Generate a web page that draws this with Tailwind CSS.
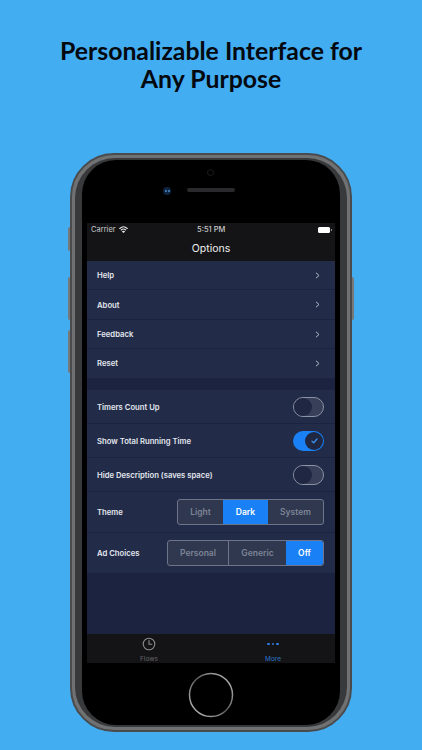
<!DOCTYPE html>
<html lang="en">

<head>
    <meta charset="UTF-8" />
    <title>Options</title>
    <script src="https://cdn.jsdelivr.net/npm/@tailwindcss/browser@4"></script>
</head>

<body class="bg-[#42adf0] w-[422px] h-[750px] overflow-hidden font-['Inter','Liberation_Sans',sans-serif]">

    <h1 class="pt-[37px] h-[153px] text-center text-[24.8px] leading-[27.5px] font-bold text-[#04080f] font-['Lato',sans-serif]">
        Personalizable Interface for<br />Any Purpose
    </h1>

    <!-- phone -->
    <div class="relative ml-[70px] w-[282px] h-[579px] rounded-[44px] bg-[#707173] border-[2px] border-[#4a4b4d] px-[3px] py-[3px]">
        <!-- side buttons -->
        <div class="absolute left-[-4px] top-[72px] w-[2px] h-[24px] bg-[#77787a] rounded-l"></div>
        <div class="absolute left-[-4px] top-[122px] w-[2px] h-[43px] bg-[#77787a] rounded-l"></div>
        <div class="absolute left-[-4px] top-[175px] w-[2px] h-[43px] bg-[#77787a] rounded-l"></div>
        <div class="absolute right-[-4px] top-[122px] w-[2px] h-[43px] bg-[#77787a] rounded-r"></div>

        <div class="h-full rounded-[40px] bg-[#38393b] px-[7px] py-[2px]">
            <div class="h-full rounded-[34px] bg-black flex flex-col items-center overflow-hidden">
                <!-- earpiece area -->
                <div class="relative h-[63px] w-full shrink-0">
                    <div class="absolute left-[125px] top-[9px] w-[7px] h-[7px] rounded-full border border-[#1c1c1e]"></div>
                    <div class="absolute left-[81px] top-[27px] w-[8px] h-[8px] rounded-full bg-[#10233f] flex items-center justify-center gap-px">
                        <span class="w-[2px] h-[2px] rounded-full bg-[#4d8fd0]"></span>
                        <span class="w-[2px] h-[2px] rounded-full bg-[#4d8fd0]"></span>
                    </div>
                    <div class="absolute left-[105px] top-[28px] w-[48px] h-[4px] rounded-full bg-[#2a2a2c]"></div>
                </div>

                <!-- screen -->
                <div class="w-[248px] h-[440px] shrink-0 flex flex-col bg-[#1b2340] text-[#e4e7ee]">
                    <div class="bg-[#141416] h-[38px] shrink-0">
                        <div class="relative h-[13px] flex items-center justify-between pl-[4px] pr-[3px] text-[7.5px] text-[#c9c9cb]">
                            <div class="flex items-center gap-[3px]">
                                <span>Carrier</span>
                                <svg width="9" height="7" viewBox="0 0 18 14" fill="none" stroke="#e8e8e8" stroke-width="2.2" stroke-linecap="round">
                                    <path d="M1.5 5 C6 0.7 12 0.7 16.5 5" />
                                    <path d="M4.5 8 C7.3 5.6 10.7 5.6 13.5 8" />
                                    <path d="M7.5 11 C8.4 10.3 9.6 10.3 10.5 11 L9 12.5 Z" fill="#e8e8e8" />
                                </svg>
                            </div>
                            <span class="absolute left-[110px] top-0 leading-[13px] font-medium">5:51 PM</span>
                            <div class="flex items-center gap-px">
                                <div class="w-[12px] h-[6px] rounded-[1.5px] bg-white"></div>
                                <div class="w-px h-[2px] bg-[#8a8a8c]"></div>
                            </div>
                        </div>
                        <div class="h-[25px] flex items-center justify-center text-[10.5px] text-[#eeeeee]">Options</div>
                    </div>

                    <!-- links -->
                    <div class="text-[7.7px] font-semibold">
                        <div class="h-[29px] pl-[10px] pr-[15px] pt-px bg-[#222c49] border-b border-[#1b2340] flex items-center justify-between">
                            <span>Help</span>
                            <svg width="5" height="7" viewBox="0 0 5 7" fill="none" stroke="#b4bac8" stroke-width="1"><path d="M1 0.8 L4 3.5 L1 6.2" /></svg>
                        </div>
                        <div class="h-[29.5px] pl-[10px] pr-[15px] pt-px bg-[#222c49] border-b border-[#1b2340] flex items-center justify-between">
                            <span class="mt-[2px]">About</span>
                            <svg width="5" height="7" viewBox="0 0 5 7" fill="none" stroke="#b4bac8" stroke-width="1"><path d="M1 0.8 L4 3.5 L1 6.2" /></svg>
                        </div>
                        <div class="h-[29.5px] pl-[10px] pr-[15px] pt-px bg-[#222c49] border-b border-[#1b2340] flex items-center justify-between">
                            <span class="mt-[2px]">Feedback</span>
                            <svg width="5" height="7" viewBox="0 0 5 7" fill="none" stroke="#b4bac8" stroke-width="1"><path d="M1 0.8 L4 3.5 L1 6.2" /></svg>
                        </div>
                        <div class="h-[29px] pl-[10px] pr-[15px] bg-[#222c49] flex items-center justify-between">
                            <span class="mt-[1px]">Reset</span>
                            <svg width="5" height="7" viewBox="0 0 5 7" fill="none" stroke="#b4bac8" stroke-width="1"><path d="M1 0.8 L4 3.5 L1 6.2" /></svg>
                        </div>
                    </div>

                    <!-- settings -->
                    <div class="mt-[12px] text-[7.7px] font-semibold">
                        <div class="h-[34px] pl-[10px] pr-[11px] pt-px bg-[#222c49] border-b border-[#1b2340] flex items-center justify-between">
                            <span class="mt-[2px]">Timers Count Up</span>
                            <div class="w-[31px] h-[20px] rounded-full border border-[#8b92a3] bg-[#383f58] flex">
                                <div class="w-[18px] h-[18px] rounded-full bg-[#1f2743]"></div>
                            </div>
                        </div>
                        <div class="h-[34px] pl-[10px] pr-[11px] pt-px bg-[#222c49] border-b border-[#1b2340] flex items-center justify-between">
                            <span class="mt-[2px]">Show Total Running Time</span>
                            <div class="w-[31px] h-[20px] rounded-full bg-[#1a80f5] flex justify-end p-px">
                                <div class="w-[18px] h-[18px] rounded-full bg-[#1f2743] flex items-center justify-center">
                                    <svg width="7" height="6" viewBox="0 0 7 6" fill="none" stroke="#3d8fe8" stroke-width="1.3" stroke-linecap="round" stroke-linejoin="round"><path d="M1 3.2 L2.7 4.8 L6 1" /></svg>
                                </div>
                            </div>
                        </div>
                        <div class="h-[34px] pl-[10px] pr-[11px] pt-px bg-[#222c49] border-b border-[#1b2340] flex items-center justify-between">
                            <span class="mt-[2px]">Hide Description (saves space)</span>
                            <div class="w-[31px] h-[20px] rounded-full border border-[#8b92a3] bg-[#383f58] flex">
                                <div class="w-[18px] h-[18px] rounded-full bg-[#1f2743]"></div>
                            </div>
                        </div>
                        <div class="h-[41px] pl-[10px] pr-[11px] bg-[#222c49] border-b border-[#1b2340] flex items-center justify-between">
                            <span class="mt-[1px]">Theme</span>
                            <div class="flex h-[26px] w-[147px] rounded-[3px] border border-[#6e7589] bg-[#30384f] text-[8.5px] text-[#7d8496] overflow-hidden">
                                <div class="w-[45px] flex items-center justify-center">Light</div>
                                <div class="w-[45px] flex items-center justify-center bg-[#1a80f5] text-white">Dark</div>
                                <div class="flex-1 flex items-center justify-center">System</div>
                            </div>
                        </div>
                        <div class="h-[40px] pl-[10px] pr-[11px] bg-[#222c49] flex items-center justify-between">
                            <span class="mt-[1px]">Ad Choices</span>
                            <div class="flex h-[26px] w-[157px] rounded-[3px] border border-[#6e7589] bg-[#30384f] text-[8.5px] text-[#7d8496] overflow-hidden">
                                <div class="w-[61px] flex items-center justify-center border-r border-[#6e7589]">Personal</div>
                                <div class="w-[57px] flex items-center justify-center">Generic</div>
                                <div class="flex-1 flex items-center justify-center bg-[#1a80f5] text-white">Off</div>
                            </div>
                        </div>
                    </div>

                    <!-- tab bar -->
                    <div class="mt-auto h-[29px] bg-[#141416] flex text-[6.5px] leading-[8px]">
                        <div class="flex-1 flex flex-col items-center pt-[3px] text-[#66676a]">
                            <svg width="14" height="14" viewBox="0 0 14 14" fill="none" stroke="#8a8b8e" stroke-width="1.1" stroke-linecap="round"><circle cx="7" cy="7" r="5.8" /><path d="M7 3.6 V7.2 H9.8" /></svg>
                            <span class="mt-[4px]">Flows</span>
                        </div>
                        <div class="flex-1 flex flex-col items-center pt-[3px] text-[#2b74d0]">
                            <div class="h-[14px] flex items-center gap-[2px]">
                                <span class="w-[2.5px] h-[2.5px] rounded-full bg-[#2b7ee0]"></span>
                                <span class="w-[2.5px] h-[2.5px] rounded-full bg-[#2b7ee0]"></span>
                                <span class="w-[2.5px] h-[2.5px] rounded-full bg-[#2b7ee0]"></span>
                            </div>
                            <span class="mt-[4px]">More</span>
                        </div>
                    </div>
                </div>

                <!-- home button -->
                <svg class="mt-[9px]" width="46" height="46" viewBox="0 0 46 46" fill="none">
                    <defs>
                        <linearGradient id="ring" x1="0" y1="1" x2="1" y2="0">
                            <stop offset="0" stop-color="#c8c8ca" />
                            <stop offset="0.5" stop-color="#5a5a5c" />
                            <stop offset="1" stop-color="#c8c8ca" />
                        </linearGradient>
                    </defs>
                    <circle cx="23" cy="23" r="21.5" stroke="url(#ring)" stroke-width="1.5" />
                </svg>
            </div>
        </div>
    </div>

</body>

</html>
